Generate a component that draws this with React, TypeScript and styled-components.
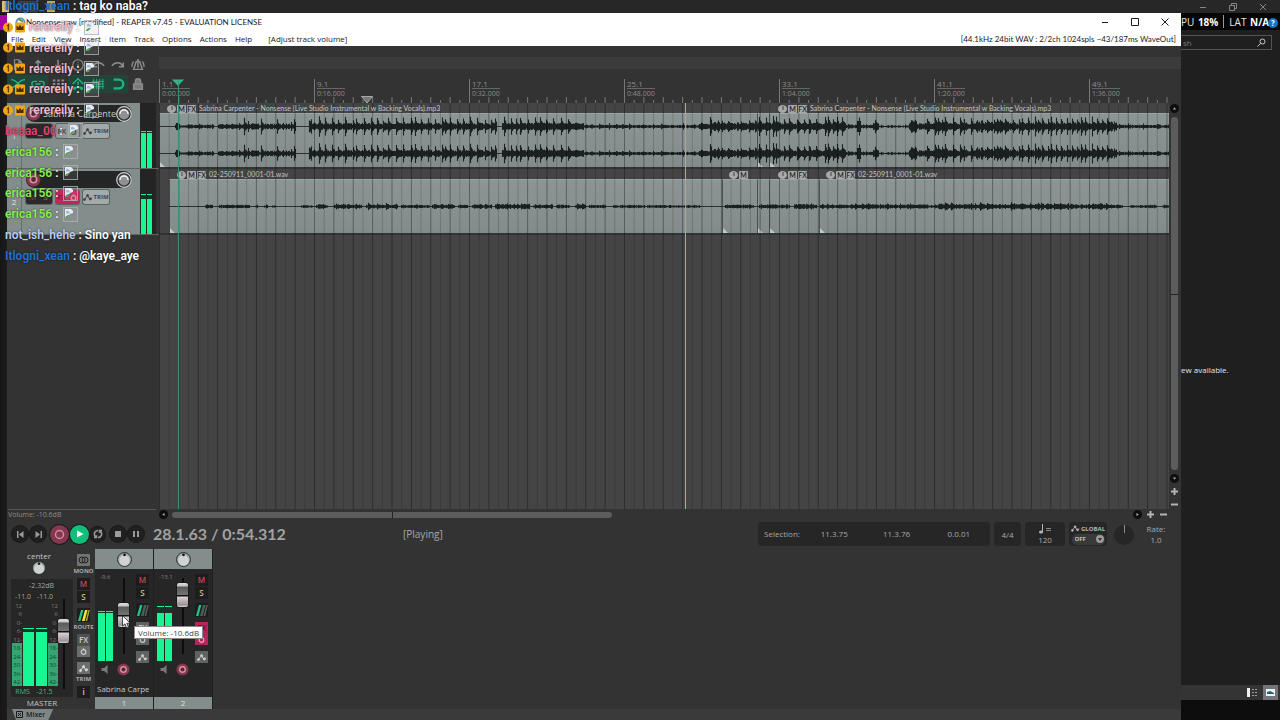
import React from 'react';
import styled, { createGlobalStyle, css } from 'styled-components';

const UI = '"Open Sans", "Noto Sans", sans-serif';
const GREEN = '#1af594';
const TEAL = '#2fb98c';
const PANEL = '#838d8c';

const GlobalStyle = createGlobalStyle`
  * { box-sizing: border-box; }
  html, body, #root { height: 100%; }
  body { margin: 0; background: #1f1f1f; font-family: ${UI}; overflow: hidden; }
  button, input, select {
    font: inherit; color: inherit; background: none; border: 0; padding: 0; margin: 0; min-width: 0; border-radius: 0;
  }
  ul, ol { list-style: none; margin: 0; padding: 0; }
  svg { display: block; }
`;

/* ---------- desktop ---------- */

const Desktop = styled.main`
  position: relative;
  height: 100vh;
  min-height: 480px;
  overflow: hidden;
  background: linear-gradient(90deg, #161616, #1c1c1c 7px, #1f1f1f 8px);
  display: flex;
  flex-direction: column;
`;
const DesktopBar = styled.header`
  flex: 0 0 13px;
  background: #272727;
  display: flex;
  align-items: center;
  justify-content: space-between;
  padding: 0 13px 0 2px;
  color: #858585;
`;
const BarGroup = styled.div<{ $gap: number }>`
  display: flex;
  align-items: center;
  gap: ${p => p.$gap}px;
`;
const Swatch = styled.span<{ $color: string; $width: number }>`
  width: ${p => p.$width}px;
  height: 11px;
  background: ${p => p.$color};
`;
const GhostButton = styled.button`
  display: flex;
  color: inherit;
`;
const EdgeMark = styled.div`
  width: 7px;
  height: 15px;
  margin-top: 2px;
  background: #a800a8;
`;
const Underlay = styled.div`
  flex: 1;
  min-height: 0;
  display: flex;
  justify-content: space-between;
`;
const SideApp = styled.aside`
  width: 99px;
  display: flex;
  flex-direction: column;
  color: #e6e6e6;
  font-size: 8px;
`;
const StatsBar = styled.div`
  height: 17px;
  background: #050505;
  display: flex;
  align-items: center;
  gap: 5px;
  font-size: 10px;
  line-height: 14px;
  white-space: nowrap;
  b { font-weight: 700; color: #fff; margin-left: 1px; }
`;
const StatSplit = styled.span`
  flex: none;
  width: 1px;
  height: 13px;
  background: #9a9a9a;
`;
const Help = styled.button`
  position: absolute;
  right: 2px;
  top: 18px;
  width: 10px;
  height: 10px;
  border-radius: 50%;
  background: #1673c4;
  color: #fff;
  font-size: 8px;
  font-weight: 700;
  line-height: 10px;
`;
const SearchBox = styled.label`
  display: flex;
  align-items: center;
  height: 15px;
  margin: 5px 8px 0 0;
  border: 1px solid #545454;
  border-left: 0;
  padding-right: 5px;
  color: #9a9a9a;
  input { flex: 1; width: 0; padding-left: 2px; font-size: 8px; height: 13px; }
  input::placeholder { color: #777; }
`;
const SideBody = styled.div`
  flex: 1;
  display: flex;
  align-items: center;
  padding-top: 4px;
  line-height: 12px;
`;
const SideStatus = styled.div`
  height: 15px;
  background: #343434;
  display: flex;
  justify-content: flex-end;
  padding-right: 2px;
  gap: 3px;
`;
const ViewButton = styled.button<{ $on?: boolean }>`
  width: 15px;
  display: grid;
  place-items: center;
  background: ${p => (p.$on ? '#77737c' : 'transparent')};
`;
const SideFoot = styled.div`
  height: 20px;
  background: #0d0d0d;
`;

/* ---------- REAPER window ---------- */

const Window = styled.section`
  position: absolute;
  left: 7px;
  right: 99px;
  top: 13px;
  bottom: 0;
  display: flex;
  flex-direction: column;
  background: #333;
  color: #a8a8a8;
`;
const TitleBar = styled.header`
  flex: 0 0 19px;
  display: flex;
  align-items: center;
  padding: 0 11px 1px 8px;
  background: #fff;
  color: #1b1b1b;
  h1 { flex: 1; margin: 0; font-family: Lato, ${UI}; font-size: 8px; line-height: 12px; font-weight: 400; white-space: nowrap; }
`;
const WinButtons = styled.div`
  display: flex;
  gap: 20px;
`;
const MenuBar = styled.nav`
  flex: 0 0 14px;
  display: flex;
  align-items: center;
  gap: 8px;
  padding: 0 5px 1px 4px;
  background: #fff;
  color: #1b1b1b;
  font-size: 8px;
  line-height: 12px;
  white-space: nowrap;
`;
const MenuNote = styled.span<{ $end?: boolean }>`
  margin-left: ${p => (p.$end ? 'auto' : '8px')};
  ${p => p.$end && css`font-family: Lato, ${UI};`}
`;
const Workspace = styled.div`
  flex: 1;
  min-height: 0;
  display: flex;
`;

/* ---------- track control panel ---------- */

const TrackPanel = styled.section`
  flex: 0 0 152px;
  display: flex;
  flex-direction: column;
`;
const Toolbar = styled.div`
  display: grid;
  grid-template-columns: repeat(7, 20px);
  grid-auto-rows: 18px;
  row-gap: 1px;
  padding: 10px 0 9px 1px;
  height: 57px;
`;
const ToolButton = styled.button<{ $on?: boolean }>`
  display: grid;
  place-items: center;
  color: ${p => (p.$on ? '#22b584' : '#8b8b8b')};
  background: ${p => (p.$on ? '#214539' : 'transparent')};
`;
const Track = styled.article`
  display: flex;
  height: 66px;
  border-bottom: 1px solid #5e6665;
`;
const TrackIndex = styled.div`
  width: 15px;
  display: flex;
  flex-direction: column;
  align-items: center;
  justify-content: center;
  background: ${PANEL};
  border-right: 1px solid #666f6e;
  color: #dfe3e3;
  font-size: 8px;
`;
const TrackBody = styled.div`
  flex: 1;
  background: ${PANEL};
  display: flex;
  flex-direction: column;
  gap: 2px;
  padding: 2px 8px 0 4px;
`;
const NameBar = styled.div`
  display: flex;
  align-items: center;
  justify-content: space-between;
  height: 17px;
  border-radius: 9px;
  background: #242626;
  input { width: 75px; font-size: 9px; line-height: 14px; height: 15px; color: #c6c9c9; text-align: right; }
`;
const ControlRow = styled.div`
  display: flex;
  gap: 4px;
  height: 14px;
`;
const Segment = styled.div<{ $tone: string; $width: number }>`
  display: flex;
  width: ${p => p.$width}px;
  background: ${p => p.$tone};
  border-radius: 2px;
  box-shadow: 0 0 0 1px rgba(30, 34, 34, 0.4);
`;
const Key = styled.button<{ $color: string; $small?: boolean }>`
  flex: 1;
  display: flex;
  align-items: center;
  justify-content: center;
  color: ${p => p.$color};
  font-size: ${p => (p.$small ? 6 : 8)}px;
  font-weight: ${p => (p.$small ? 700 : 400)};
  line-height: 12px;
`;
const TrackMeter = styled.div`
  width: 19px;
  background: #242424;
  border-right: 3px solid #333;
  padding-left: 1px;
  display: flex;
  align-items: flex-end;
  gap: 1px;
`;
const MeterBar = styled.span<{ $width: number; $gap: number }>`
  width: ${p => p.$width}px;
  background: linear-gradient(${GREEN} 1px, #16352a 1px, #16352a ${p => p.$gap + 1}px, ${GREEN} ${p => p.$gap + 1}px);
`;
const StatusLine = styled.p`
  margin: auto 3px 0 1px;
  border-top: 1px solid #555;
  height: 11px;
  font-size: 7px;
  line-height: 10px;
  color: #8b8b8b;
`;

/* ---------- arrange view ---------- */

const Arrange = styled.section`
  flex: 1;
  min-width: 0;
  display: flex;
  flex-direction: column;
`;
const Strip = styled.div`
  height: 12px;
  margin-top: 11px;
  background: #3b3b3b;
`;
const Canvas = styled.div`
  position: relative;
  flex: 1;
  min-height: 0;
  display: flex;
  flex-direction: column;
`;
const Ruler = styled.div`
  position: relative;
  height: 34px;
  margin-right: 12px;
  overflow: hidden;
`;
const RulerMark = styled.div`
  position: absolute;
  top: 10px;
  width: 31px;
  height: 24px;
  border-left: 1px solid #777;
  padding-left: 2px;
  color: #8c8c8c;
  font-size: 8px;
  line-height: 9px;
  span { display: block; }
  span + span { border-top: 1px solid #666; font-size: 7px; }
`;
const Fill = styled.svg`
  position: absolute;
  inset: 0;
  width: 100%;
  height: 100%;
  pointer-events: none;
`;
const TimelineRow = styled.div`
  flex: 1;
  min-height: 0;
  display: flex;
`;
const Timeline = styled.div`
  position: relative;
  flex: 1;
  min-width: 0;
  overflow: hidden;
  background: #444;
`;
const Lane = styled.div`
  position: relative;
  border-bottom: 2px solid #303434;
`;
const LaneHead = styled.div`
  position: relative;
  height: 10px;
  overflow: hidden;
`;
const ClipLabel = styled.div`
  position: absolute;
  top: 1px;
  display: flex;
  align-items: center;
  gap: 1px;
  height: 9px;
  font-family: Lato, ${UI};
  font-size: 7px;
  line-height: 9px;
  color: #c3c6c6;
  white-space: nowrap;
  z-index: 1;
  span { padding-left: 2px; }
`;
const Badge = styled.button<{ $round?: boolean }>`
  width: 9px;
  height: 8px;
  border-radius: ${p => (p.$round ? '50%' : '1px')};
  background: #a5a9a9;
  color: #222;
  font-size: 7px;
  line-height: 8px;
  font-weight: 600;
  display: grid;
  place-items: center;
`;
const Clips = styled.div<{ $start: number }>`
  position: relative;
  display: flex;
  height: 54px;
  margin-left: ${p => p.$start}px;
`;
const Clip = styled.div`
  background:
    linear-gradient(45deg, #c3c8c8 3px, transparent 4px),
    linear-gradient(#8a9594, #818c8b);
  border-top: 1px solid #9aa5a4;
  border-left: 1px solid #4a5250;
`;
const Wave = styled.svg`
  position: absolute;
  left: 0;
  top: 0;
`;
const Cursor = styled.div<{ $color: string; $top: number }>`
  position: absolute;
  top: ${p => p.$top}px;
  bottom: 0;
  width: 1px;
  background: ${p => p.$color};
  z-index: 2;
`;
const Marker = styled.svg`
  position: absolute;
  z-index: 2;
`;
const VScroll = styled.div`
  flex: 0 0 12px;
  display: flex;
  flex-direction: column;
  align-items: center;
  gap: 4px;
  padding: 1px 2px 0 0;
`;
const HScroll = styled.div`
  height: 11px;
  display: flex;
  align-items: center;
  gap: 4px;
  padding: 0 13px 0 0;
`;
const VThumb = styled.div`
  flex: 1;
  width: 7px;
  border-radius: 4px;
  background: linear-gradient(transparent 50%, #222 50%, #222 calc(50% + 1px), transparent calc(50% + 1px)) #5c5c5c;
`;
const HTrack = styled.div`
  flex: 1;
  height: 6px;
`;
const HThumb = styled.div`
  width: 46%;
  height: 6px;
  border-radius: 3px;
  background: linear-gradient(90deg, transparent 50%, #222 50%, #222 calc(50% + 1px), transparent calc(50% + 1px)) #5c5c5c;
`;
const ScrollButton = styled.button<{ $dark?: boolean }>`
  width: 9px;
  height: 9px;
  flex: none;
  border-radius: 50%;
  background: ${p => (p.$dark ? '#0e0e0e' : 'transparent')};
  color: #b4b4b4;
  display: grid;
  place-items: center;
`;

/* ---------- transport ---------- */

const Transport = styled.section`
  flex: 0 0 28px;
  display: flex;
  align-items: center;
  padding: 0 9px 0 5px;
  font-size: 9px;
  line-height: 12px;
`;
const RoundButton = styled.button<{ $size: number; $kind?: 'record' | 'play' }>`
  width: ${p => p.$size}px;
  height: ${p => p.$size}px;
  border-radius: 50%;
  display: grid;
  place-items: center;
  color: #9b9b9b;
  background: #202020;
  box-shadow: 0 0 0 1px #191919;
  ${p => p.$kind === 'record' && css`background: #843850; color: #d08c9c;`}
  ${p => p.$kind === 'play' && css`background: #14bd78; color: #fff;`}
`;
const ButtonCluster = styled.div<{ $gap: number; $after: number }>`
  display: flex;
  align-items: center;
  gap: ${p => p.$gap}px;
  margin-right: ${p => p.$after}px;
`;
const Clock = styled.output`
  width: 250px;
  font-size: 16px;
  line-height: 20px;
  font-weight: 700;
  color: #a2a2a2;
  font-family: Lato, ${UI};
`;
const PlayState = styled.span`
  flex: 1;
  font-size: 10px;
`;
const Box = styled.div<{ $width: number }>`
  width: ${p => p.$width}px;
  height: 24px;
  margin-right: 4px;
  border-radius: 4px;
  background: #262626;
  display: flex;
  flex-direction: column;
  align-items: center;
  justify-content: center;
  font-size: 8px;
  line-height: 10px;
  input { width: 100%; text-align: center; height: 11px; }
`;
const SelectionBox = styled.fieldset`
  border: 0;
  margin: 0 4px 0 0;
  padding: 0 0 0 6px;
  width: 232px;
  height: 24px;
  border-radius: 4px;
  background: #262626;
  display: grid;
  grid-template-columns: 39px 1fr 1fr 1fr;
  align-items: center;
  font-size: 8px;
  input { width: 100%; text-align: center; height: 12px; }
`;
const Global = styled.label`
  display: flex;
  align-items: center;
  gap: 1px;
  font-size: 6px;
  line-height: 10px;
  font-weight: 700;
  color: #b5b5b5;
`;
const GlobalSelect = styled.div`
  display: flex;
  align-items: center;
  width: 33px;
  height: 11px;
  padding: 0 1px 0 3px;
  border-radius: 5px;
  background: #3a3a3a;
  color: #c4c4c4;
  select { flex: 1; appearance: none; font-size: 6px; line-height: 10px; font-weight: 700; }
`;
const RateKnob = styled.div`
  margin-left: 2px;
`;
const RateField = styled.label`
  width: 32px;
  display: flex;
  flex-direction: column;
  align-items: center;
  font-size: 8px;
  line-height: 11px;
  margin-left: 5px;
  input { width: 100%; text-align: center; height: 11px; }
`;

/* ---------- mixer ---------- */

const Mixer = styled.section`
  position: relative;
  flex: 0 0 161px;
  min-height: 0;
  display: flex;
  padding: 1px 0 0 4px;
`;
const Master = styled.article`
  width: 84px;
  display: flex;
  gap: 2px;
`;
const MasterMain = styled.div`
  width: 62px;
  display: flex;
  flex-direction: column;
  font-size: 8px;
  line-height: 11px;
  color: #c4c4c4;
`;
const MasterPan = styled.div`
  width: 56px;
  display: flex;
  flex-direction: column;
  align-items: center;
  padding-top: 1px;
`;
const MasterBox = styled.div`
  width: 62px;
  margin-top: 4px;
  padding: 1px 2px 0 1px;
  background: #262626;
  display: grid;
  grid-template-columns: 44px 15px;
  grid-template-rows: 11px 11px 84px 11px;
  font-size: 7px;
  color: #a5a5a5;
`;
const MasterName = styled.span`
  text-align: center;
`;
const Readout = styled.div<{ $green?: boolean; $wide?: boolean }>`
  display: flex;
  justify-content: space-around;
  grid-column: ${p => (p.$wide ? '1 / 3' : '1 / 2')};
  color: ${p => (p.$green ? '#35bd85' : 'inherit')};
  line-height: 11px;
  white-space: nowrap;
`;
const MasterMeter = styled.div`
  display: flex;
  align-items: flex-end;
  justify-content: space-between;
  grid-column: 1;
  grid-row: 3;
  width: 46px;
`;
const Scale = styled.div`
  height: 84px;
  width: 10px;
  display: flex;
  flex-direction: column;
  justify-content: space-between;
  font-size: 6px;
  line-height: 8px;
  text-align: right;
  color: #808080;
  background: linear-gradient(transparent 41px, #35a673 41px);
  span:nth-child(n + 6) { color: #12472f; }
`;
const MasterFader = styled.div`
  grid-column: 2;
  grid-row: 2 / 5;
  display: flex;
  justify-content: center;
  padding-top: 8px;
`;
const Fader = styled.input<{ $length: number }>`
  appearance: none;
  writing-mode: vertical-lr;
  direction: rtl;
  width: 14px;
  height: ${p => p.$length}px;
  background: linear-gradient(#0d0d0d, #0d0d0d) center / 2px 100% no-repeat;
  &::-webkit-slider-thumb {
    appearance: none;
    width: 13px;
    height: 26px;
    border-radius: 3px;
    border: 1px solid #1b1b1b;
    background: linear-gradient(#dedede 0, #c4c4c4 3px, #5a5a5a 4px, #747474 12px, #111 12px, #111 13px, #d8d2d4 14px, #9c9195 22px, #d9d9d9 24px);
  }
`;
const ButtonStack = styled.div`
  width: 17px;
  display: flex;
  flex-direction: column;
  align-items: center;
  padding-top: 5px;
`;
const StackLabel = styled.span`
  margin-bottom: 2px;
  font-size: 6px;
  line-height: 10px;
  font-weight: 700;
  color: #a8a8a8;
`;
const SmallButton = styled.button<{ $tone?: string; $color?: string; $height?: number; $after?: number }>`
  flex: none;
  width: 13px;
  height: ${p => p.$height ?? 12}px;
  margin-bottom: ${p => p.$after ?? 1}px;
  display: grid;
  place-items: center;
  background: ${p => p.$tone ?? '#1d1d1d'};
  color: ${p => p.$color ?? '#ccc'};
  font-size: 8px;
  line-height: 10px;
  font-weight: 600;
`;
const Channel = styled.article`
  width: 59px;
  border-right: 1px solid #1f1f1f;
  background: #262626;
  display: flex;
  flex-direction: column;
`;
const ChannelTop = styled.div`
  height: 20px;
  background: ${PANEL};
  display: grid;
  place-items: center;
`;
const ChannelBody = styled.div`
  height: 94px;
  display: grid;
  grid-template-columns: 20px 17px 1fr;
  justify-items: center;
`;
const ChannelMeters = styled.div`
  display: flex;
  flex-wrap: wrap;
  align-items: flex-end;
  align-content: space-between;
  padding: 4px 0 3px 3px;
  gap: 1px;
  font-size: 6px;
  line-height: 9px;
  color: #858585;
  span:first-child { width: 100%; padding-left: 2px; }
`;
const FaderSlot = styled.div`
  padding-top: 9px;
  display: flex;
  justify-content: center;
`;
const ChannelFoot = styled.div`
  height: 12px;
  display: grid;
  grid-template-columns: 20px 17px;
  place-items: center;
  color: #777;
`;
const ChannelName = styled.input`
  width: 54px;
  height: 22px;
  padding: 4px 0 0 2px;
  font-size: 8px;
  color: #c6c6c6;
`;
const ChannelNumber = styled.div`
  height: 12px;
  margin-top: auto;
  background: ${PANEL};
  color: #dde1e1;
  font-size: 8px;
  line-height: 12px;
  text-align: center;
`;
const Tip = styled.div`
  position: absolute;
  left: 127px;
  top: 78px;
  height: 13px;
  padding: 0 3px;
  background: #fff;
  border: 1px solid #888;
  color: #444;
  font-size: 8px;
  line-height: 11px;
  white-space: nowrap;
`;
const Pointer = styled.svg`
  position: absolute;
  left: 115px;
  top: 67px;
`;
const DockTabs = styled.footer`
  flex: 0 0 11px;
  background: #3a3a3a;
  padding-left: 5px;
`;
const DockTab = styled.button`
  display: flex;
  align-items: center;
  gap: 3px;
  height: 11px;
  padding: 0 8px 0 4px;
  background: #7d8685;
  clip-path: polygon(0 0, 100% 0, calc(100% - 5px) 100%, 4px 100%);
  color: #1c1c1c;
  font-size: 7px;
  line-height: 10px;
  font-weight: 600;
`;
const KnobLabel = styled.label`
  position: relative;
  display: block;
  flex: none;
  input { position: absolute; inset: 0; width: 100%; height: 100%; opacity: 0; }
`;

/* ---------- chat overlay ---------- */

const Chat = styled.ol`
  position: absolute;
  left: 5px;
  top: -4px;
  height: 270px;
  display: grid;
  grid-auto-rows: 1fr;
  font-family: Roboto, sans-serif;
  font-size: 12px;
  line-height: 14px;
  font-weight: 600;
  color: #fff;
  text-shadow: 0 0 2px rgba(0, 0, 0, 0.7);
  z-index: 5;
`;
const Message = styled.li`
  display: flex;
  align-items: center;
  gap: 3px;
  white-space: nowrap;
`;
const Author = styled.span<{ $color: string }>`
  color: ${p => p.$color};
`;
const Badges = styled.span`
  display: flex;
  margin: 0 1px 0 -2px;
`;
const Body = styled.span`
  font-weight: 600;
`;
const Emote = styled.span`
  margin-left: 2px;
`;

/* ---------- drawings ---------- */

function Knob({ label, size, value = 50 }: { label: string; size: number; value?: number }) {
  return (
    <KnobLabel>
      <input type="range" aria-label={label} defaultValue={value} />
      <svg width={size} height={size} viewBox="0 0 16 16">
        <circle cx="8" cy="8" r="7.4" fill="#a9adad" stroke="#222" strokeWidth="1" />
        <circle cx="8" cy="9" r="5.6" fill="#cfd3d3" />
        <circle cx="8" cy="3" r="1.4" fill="#111" />
      </svg>
    </KnobLabel>
  );
}

function PanKnob({ label }: { label: string }) {
  return (
    <KnobLabel>
      <input type="range" aria-label={label} />
      <svg width="16" height="16" viewBox="0 0 16 16">
        <circle cx="8" cy="8" r="7.3" fill="#2e2e2e" stroke="#d2d2d2" strokeWidth="1.2" />
        <circle cx="8" cy="8" r="5.4" fill="#8f9292" />
        <path d="M4 8a4 4 0 0 1 8 0" stroke="#f4f4f4" strokeWidth="1.4" fill="none" />
      </svg>
    </KnobLabel>
  );
}

const RecordDot = ({ size }: { size: number }) => (
  <svg width={size} height={size} viewBox="0 0 14 14">
    <circle cx="7" cy="7" r="6.5" fill="#85384f" />
    <circle cx="7" cy="7" r="3" fill="#5a2536" stroke="#d493a3" strokeWidth="1.5" />
  </svg>
);

const Power = () => (
  <svg width="9" height="9" viewBox="0 0 10 10" fill="none" stroke="currentColor" strokeWidth="1.3">
    <circle cx="5" cy="5.5" r="2.6" />
    <path d="M5 1.4v2" />
  </svg>
);

const Envelope = ({ width = 10 }: { width?: number }) => (
  <svg width={width} height="9" viewBox="0 0 12 9" fill="none" stroke="currentColor" strokeWidth="1.2">
    <path d="M1.5 7L5.5 2.2L8 6.5L11 5" />
    <circle cx="1.8" cy="7" r="1.2" fill="currentColor" />
    <circle cx="5.5" cy="2.2" r="1.2" fill="currentColor" />
    <circle cx="8.8" cy="6.2" r="1.2" fill="currentColor" />
  </svg>
);

const RouteIcon = ({ bright }: { bright?: boolean }) => (
  <svg width="13" height="13" viewBox="0 0 13 13">
    <path d="M4 1L1 12H3.4L6.4 1Z" fill="#1fc48a" />
    <path d="M8 1L5 12H7.6L10.6 1Z" fill={bright ? '#f3e436' : '#46615a'} />
    <path d="M11.4 1L8.6 12H10.2L12.8 1Z" fill={bright ? '#b1a62a' : '#5a5f5e'} />
  </svg>
);

const Speaker = () => (
  <svg width="8" height="9" viewBox="0 0 8 9" fill="currentColor">
    <path d="M0.5 3h2.6L6.6 0v9L3.1 6H0.5z" />
  </svg>
);

const toolIcons: { name: string; on?: boolean; art: React.ReactNode }[] = [
  { name: 'New project', art: <path d="M4 2h5l3 3v8H4zM9 2v3h3" /> },
  { name: 'Open project', art: <path d="M8 12V3M5 6l3-3 3 3" strokeWidth="1.8" /> },
  { name: 'Save project', art: <path d="M8 2v9M5 8l3 3 3-3" strokeWidth="1.8" /> },
  { name: 'Project settings', art: <path d="M8 2a6 6 0 1 0 .01 0M8 4.5v1M8 7v4" /> },
  { name: 'Undo', art: <path d="M2 5v5h5M2.5 9.5C5 4.5 11 4 15 9" strokeWidth="1.8" /> },
  { name: 'Redo', art: <path d="M14 5v5H9M13.5 9.5C11 4.5 5 4 1 9" strokeWidth="1.8" /> },
  { name: 'Metronome', art: <path d="M6 4h4l3 9H3zM8 4v7M3 4C1 6 1 9 1 10M13 4c2 2 2 5 2 6M8 1v2" strokeWidth="1.7" /> },
  { name: 'Auto crossfade', on: true, art: <path d="M0 3C8 3 8 12 16 12M0 12C8 12 8 3 16 3" strokeWidth="1.6" /> },
  { name: 'Item grouping', on: true, art: <path d="M7 5H4a3 3 0 0 0 0 6h3M9 5h3a3 3 0 0 1 0 6H9M5 8h6" strokeWidth="1.6" /> },
  { name: 'Ripple editing', art: <path d="M2 4h3M7 4h3M12 4h3M2 8h3M7 8h3M12 8h3M2 12h3M7 12h3M12 12h3" strokeWidth="2.4" /> },
  { name: 'Move envelopes', on: true, art: <path d="M2 8l6-6 6 6M4 12h8M4 12a1 1 0 1 0 .1 0M12 12a1 1 0 1 0 .1 0M8 5v4" strokeWidth="1.6" /> },
  { name: 'Grid lines', on: true, art: <path d="M3 2v12M6.5 2v12M10 2v12M13.5 2v12M1 5h14M1 8h14M1 11h14" strokeWidth="1" /> },
  { name: 'Snapping', on: true, art: <path d="M3 3h6a5 5 0 0 1 0 10H3" strokeWidth="2.6" /> },
  { name: 'Locking', art: <path d="M3 8h10v6H3zM5 8V5a3 3 0 0 1 6 0v3" fill="currentColor" fillOpacity="0.8" strokeWidth="1.6" /> },
];

/* ---------- timeline data ---------- */

const BAR8 = 155;
type Seg = [from: number, to: number, base: number, peak: number, every: number];

const musicShape: Seg[] = [
  [16, 21, 3, 4, 3], [21, 27, 1, 1, 0], [27, 55, 1.6, 3, 9], [59, 78, 2, 3, 6],
  [78, 83, 1.8, 4, 4], [83, 90, 2, 9, 7], [90, 100, 2.4, 4, 6], [100, 106, 2, 9, 6], [106, 116, 2.4, 4, 6],
  [116, 122, 2, 9, 6], [122, 133, 2.4, 4, 6], [133, 137, 2, 9, 3],
  [150, 153, 7, 8, 2], [153, 158, 3, 4, 3],
  [158, 338, 2.8, 10, 5], [343, 415, 3, 10, 5],
  [415, 425, 3, 4, 3], [425, 540, 1.4, 3, 9], [540, 551, 2.4, 4, 5], [551, 553, 8, 8, 1],
  [553, 598, 3.2, 7, 6], [598, 664, 3.4, 10, 5], [664, 687, 3.4, 10, 3], [687, 698, 1.6, 3, 5],
  [698, 702, 5, 9, 2], [702, 714, 1.4, 3, 5], [714, 720, 3, 9, 3], [720, 750, 0.8, 2, 6],
  [750, 758, 4, 8, 3], [758, 766, 2.6, 4, 4], [766, 816, 3, 10, 5], [816, 852, 4, 8, 4],
  [852, 950, 3, 10, 4], [950, 958, 4, 6, 4], [958, 1010, 1.5, 3, 14],
];
const voiceShape: Seg[] = [
  [46, 54, 1.6, 2, 3], [60, 91, 1.4, 2, 4], [96, 99, 1, 2, 2], [105, 109, 1, 2, 2], [113, 117, 0.9, 1, 2],
  [142, 154, 1, 2, 4], [157, 169, 1.6, 3, 4], [175, 203, 1.8, 3, 5], [207, 239, 1.6, 3.5, 6], [242, 271, 1.4, 2, 5],
  [273, 296, 1.8, 3, 4], [299, 309, 1.4, 2, 3], [313, 333, 1.5, 2.5, 4], [336, 371, 2, 3, 5], [374, 394, 1.4, 2.4, 4],
  [397, 411, 1.4, 2, 4], [416, 427, 1.8, 3, 4], [430, 447, 1.4, 2, 4], [454, 486, 1.1, 1.8, 4], [488, 512, 1.1, 1.6, 4],
  [512, 541, 1, 1.6, 4], [566, 595, 1.4, 2.4, 5], [600, 631, 1.6, 2.4, 4], [635, 658, 1.8, 3, 4],
  [661, 690, 1.6, 2.6, 5], [690, 770, 1.8, 3, 5], [770, 780, 1.2, 2, 4], [780, 795, 2.4, 4, 4], [795, 810, 1.8, 3, 4],
  [810, 835, 2.2, 4, 4], [835, 850, 1.6, 3, 4], [850, 880, 2.2, 4, 5],
  [880, 910, 2.2, 4, 6], [910, 932, 1.8, 3, 4], [932, 950, 2.2, 4, 4], [950, 964, 1.4, 2, 5], [971, 998, 1.1, 1.8, 6], [1003, 1018, 1.2, 2, 6],
];

function wavePath(shape: Seg[], middle: number, offset: number) {
  let seed = 7;
  const rand = () => {
    seed = (seed * 16807) % 2147483647;
    return seed / 2147483647;
  };
  let d = '';
  shape.forEach(([from, to, base, peak, every]) => {
    let next = from + 2;
    let decay = 0;
    for (let x = from; x < to; x++) {
      if (every && x >= next) {
        decay = (peak - base) * (0.55 + rand() * 0.45);
        next = x + 2 + Math.round(every * (0.2 + rand() * 1.1));
      }
      const h = base * (0.6 + rand() * 0.6) + decay;
      decay *= 0.42;
      d += `M${x - offset + 0.5} ${(middle - h).toFixed(1)}V${(middle + h).toFixed(1)}`;
    }
  });
  return d;
}

const musicTop = wavePath(musicShape, 13.5, 0);
const musicBottom = wavePath(musicShape, 40.5, 0);
const voice = wavePath(voiceShape, 27.5, 10);

interface LabelData { at: number; fx?: boolean; name?: string }
interface LaneData { start: number; clips: number[]; labels: LabelData[]; paths: string[]; axes: number[] }

const SONG = 'Sabrina Carpenter - Nonsense (Live Studio Instrumental w Backing Vocals).mp3';
const lanes: LaneData[] = [
  {
    start: 0, clips: [598, 12], paths: [musicTop, musicBottom], axes: [13.5, 40.5],
    labels: [{ at: 8, fx: true, name: SONG }, { at: 619, fx: true, name: SONG }],
  },
  {
    start: 10, clips: [553, 35, 12, 50], paths: [voice], axes: [27.5],
    labels: [{ at: 18, fx: true, name: '02-250911_0001-01.wav' }, { at: 570 }, { at: 619, fx: true }, { at: 667, fx: true, name: '02-250911_0001-01.wav' }],
  },
];

const marks = ['0:00.000', '0:16.000', '0:32.000', '0:48.000', '1:04.000', '1:20.000', '1:36.000'];
const steps = Array.from({ length: 16 }, (_, i) => i);

function LaneView({ lane }: { lane: LaneData }) {
  return (
    <Lane>
      <LaneHead>
        {lane.labels.map(l => (
          <ClipLabel key={l.at} style={{ left: l.at }}>
            <Badge $round aria-label="Item volume">
              <svg width="2" height="6"><path d="M1 0v4" stroke="#444" /></svg>
            </Badge>
            <Badge>M</Badge>
            {l.fx && <Badge>FX</Badge>}
            {l.name && <span>{l.name}</span>}
          </ClipLabel>
        ))}
      </LaneHead>
      <Clips $start={lane.start}>
        {lane.clips.map((w, i) => <Clip key={i} style={{ flex: `0 0 ${w}px` }} />)}
        <Clip style={{ flex: 1 }} />
        <Wave width="100%" height="54" fill="none">
          {lane.axes.map(y => <rect key={y} x="0" y={y - 0.5} width="100%" height="1" fill="#2a3130" />)}
          {lane.paths.map((d, i) => <path key={i} d={d} stroke="#1b2120" strokeWidth="1.1" />)}
        </Wave>
      </Clips>
    </Lane>
  );
}

const Plus = () => <svg width="7" height="7"><path d="M3.5 0v7M0 3.5h7" stroke="currentColor" strokeWidth="2" /></svg>;
const Minus = () => <svg width="7" height="7"><path d="M0 3.5h7" stroke="currentColor" strokeWidth="2" /></svg>;
const Tri = ({ turn }: { turn: number }) => (
  <svg width="5" height="5" viewBox="0 0 5 5"><path d="M1 3.5L2.5 1.2L4 3.5z" fill="currentColor" transform={`rotate(${turn} 2.5 2.5)`} /></svg>
);

function ArrangeView() {
  return (
    <Arrange>
      <Strip />
      <Canvas>
        <Ruler>
          <Fill>
            <defs>
              <pattern id="ticks" width={BAR8} height="34" patternUnits="userSpaceOnUse">
                {steps.map(i => (
                  <path key={i} d={`M${(i * BAR8) / 16 + 0.5} ${i % 2 ? 31 : 28}V34`} stroke="#777" />
                ))}
              </pattern>
            </defs>
            <rect width="100%" height="100%" fill="url(#ticks)" />
          </Fill>
          {marks.map((time, i) => (
            <RulerMark key={time} style={{ left: i * BAR8 }}>
              <span>{i * 8 + 1}.1</span>
              <span>{time}</span>
            </RulerMark>
          ))}
        </Ruler>
        <TimelineRow>
          <Timeline>
            {lanes.map((lane, i) => <LaneView key={i} lane={lane} />)}
            <Fill>
              <defs>
                <pattern id="grid" width={BAR8} height="10" patternUnits="userSpaceOnUse">
                  {steps.map(i => (
                    <path key={i} d={`M${(i * BAR8) / 16 + 0.5} 0V10`} stroke="#000" strokeOpacity={i % 2 ? 0.16 : 0.34} />
                  ))}
                </pattern>
              </defs>
              <rect width="100%" height="100%" fill="url(#grid)" />
            </Fill>
          </Timeline>
          <VScroll>
            <ScrollButton $dark aria-label="Scroll up"><Tri turn={0} /></ScrollButton>
            <VThumb />
            <ScrollButton $dark aria-label="Scroll down"><Tri turn={180} /></ScrollButton>
            <ScrollButton aria-label="Zoom in vertically"><Plus /></ScrollButton>
            <ScrollButton aria-label="Zoom out vertically"><Minus /></ScrollButton>
          </VScroll>
        </TimelineRow>
        <Marker width="12" height="8" viewBox="0 0 12 8" style={{ left: 13, top: 10 }}>
          <path d="M0 0.5h12L6 7z" fill={TEAL} />
        </Marker>
        <Marker width="12" height="8" viewBox="0 0 12 8" style={{ left: 202, top: 27 }}>
          <path d="M0.5 0.5h11L6 7z" fill="#777" stroke="#aaa" />
        </Marker>
        <Cursor $color="#3d8f76" $top={12} style={{ left: 19 }} />
        <Cursor $color="#e0a51c" $top={34} style={{ left: 526 }} />
      </Canvas>
      <HScroll>
        <ScrollButton $dark aria-label="Scroll left"><Tri turn={270} /></ScrollButton>
        <HTrack><HThumb /></HTrack>
        <ScrollButton $dark aria-label="Scroll right"><Tri turn={90} /></ScrollButton>
        <ScrollButton aria-label="Zoom in"><Plus /></ScrollButton>
        <ScrollButton aria-label="Zoom out"><Minus /></ScrollButton>
      </HScroll>
    </Arrange>
  );
}

interface TrackProps { index: number; name: string; level: number; gap: number; hot?: boolean }

function TrackControls({ index, name, level, gap, hot }: TrackProps) {
  return (
    <Track>
      <TrackIndex>{index}</TrackIndex>
      <TrackBody>
        <NameBar>
          <button aria-label={`Arm track ${index}`}><RecordDot size={15} /></button>
          <input aria-label={`Track ${index} name`} defaultValue={name} />
          <PanKnob label={`Track ${index} pan`} />
        </NameBar>
        <ControlRow>
          <Segment $tone="#2a2a2a" $width={26}>
            <Key $color="#8e4250">M</Key>
            <Key $color="#8e8b50">S</Key>
          </Segment>
          <Segment $tone={hot ? '#c2255c' : '#949b9a'} $width={23}>
            <Key $color={hot ? '#6e1433' : '#222'}>FX</Key>
            <Key $color={hot ? '#f08bab' : '#444'} aria-label="Bypass effects"><Power /></Key>
          </Segment>
          <Segment $tone="#a3aaa9" $width={26}>
            <Key $color="#444" $small><Envelope />TRIM</Key>
          </Segment>
        </ControlRow>
      </TrackBody>
      <TrackMeter>
        <MeterBar $width={5} $gap={gap} style={{ height: level }} />
        <MeterBar $width={5} $gap={gap} style={{ height: level }} />
      </TrackMeter>
    </Track>
  );
}

interface StripProps { index: number; name: string; peak: string; fader: number; level: number; gap: number; hot?: boolean }

function ChannelStrip({ index, name, peak, fader, level, gap, hot }: StripProps) {
  const fx = hot ? '#b3265a' : '#5d6261';
  return (
    <Channel>
      <ChannelTop><Knob label={`Channel ${index} pan`} size={15} /></ChannelTop>
      <ChannelBody>
        <ChannelMeters>
          <span>{peak}</span>
          <MeterBar $width={7} $gap={gap} style={{ height: level }} />
          <MeterBar $width={7} $gap={gap} style={{ height: level }} />
        </ChannelMeters>
        <FaderSlot>
          <Fader type="range" aria-label={`Channel ${index} volume`} $length={76} defaultValue={fader} />
        </FaderSlot>
        <ButtonStack>
          <SmallButton $color="#c24a5c">M</SmallButton>
          <SmallButton $color="#c8c356" $after={4}>S</SmallButton>
          <SmallButton $height={14} $after={5} aria-label="Routing"><RouteIcon /></SmallButton>
          <SmallButton $tone={fx} $color={hot ? '#6b1232' : '#ccc'} $after={0}>FX</SmallButton>
          <SmallButton $tone={fx} $color={hot ? '#f2a0bb' : '#ccc'} $height={11} $after={6} aria-label="Bypass effects"><Power /></SmallButton>
          <SmallButton $tone="#5f6463" $color="#ccc" aria-label="Envelopes"><Envelope /></SmallButton>
        </ButtonStack>
      </ChannelBody>
      <ChannelFoot>
        <button aria-label="Monitor input"><Speaker /></button>
        <button aria-label={`Arm channel ${index}`}><RecordDot size={13} /></button>
      </ChannelFoot>
      <ChannelName aria-label={`Channel ${index} name`} defaultValue={name} />
      <ChannelNumber>{index}</ChannelNumber>
    </Channel>
  );
}

const scale = ['12', '6', '0-', '6-', '12-', '18-', '24-', '30-', '36-', '42-'];

function MasterStrip() {
  return (
    <Master>
      <MasterMain>
        <MasterPan>
          <span>center</span>
          <Knob label="Master pan" size={14} />
        </MasterPan>
        <MasterBox>
          <Readout $wide>-2.32dB</Readout>
          <Readout><span>-11.0</span><span>-11.0</span></Readout>
          <MasterMeter>
            <Scale>{scale.map(s => <span key={s}>{s}</span>)}</Scale>
            <MeterBar $width={11} $gap={3} style={{ height: 58 }} />
            <MeterBar $width={11} $gap={3} style={{ height: 58 }} />
            <Scale>{scale.map(s => <span key={s}>{s}</span>)}</Scale>
          </MasterMeter>
          <Readout $green><span>RMS</span><span>-21.5</span></Readout>
          <MasterFader>
            <Fader type="range" aria-label="Master volume" $length={90} defaultValue={70} />
          </MasterFader>
        </MasterBox>
        <MasterName>MASTER</MasterName>
      </MasterMain>
      <ButtonStack>
        <SmallButton $tone="#6f7473" $color="#222" $after={0} aria-label="Mono">
          <svg width="11" height="8" viewBox="0 0 11 8" fill="none" stroke="currentColor"><circle cx="4" cy="4" r="3" /><circle cx="7" cy="4" r="3" /></svg>
        </SmallButton>
        <StackLabel>MONO</StackLabel>
        <SmallButton $color="#c24a5c">M</SmallButton>
        <SmallButton $color="#c8c356" $after={5}>S</SmallButton>
        <SmallButton $height={14} $after={0} aria-label="Routing"><RouteIcon bright /></SmallButton>
        <StackLabel>ROUTE</StackLabel>
        <SmallButton $tone="#4d5150" $after={0}>FX</SmallButton>
        <SmallButton $tone="#6a6f6e" $height={11} $after={5} aria-label="Bypass master effects"><Power /></SmallButton>
        <SmallButton $tone="#6a6f6e" $color="#ddd" $after={0} aria-label="Master envelopes"><Envelope /></SmallButton>
        <StackLabel>TRIM</StackLabel>
        <SmallButton aria-label="Project notes">i</SmallButton>
      </ButtonStack>
    </Master>
  );
}

/* ---------- chat ---------- */

const BrokenImage = () => (
  <svg width="15" height="15" viewBox="0 0 15 15">
    <rect x="0.5" y="0.5" width="14" height="14" fill="#aaa" fillOpacity="0.15" stroke="#b0b0b0" strokeOpacity="0.8" />
    <path d="M2 2h6l2 2v2L7 7 4 11H2z" fill="#e8ecf2" />
    <path d="M3 5.5a1.5 1.5 0 0 1 3-.5 1 1 0 0 1 1 1.5H3z" fill="#9db8e6" />
    <path d="M2 11c1-3 3-3 5-3l-3 3z" fill="#4aa34a" />
  </svg>
);

const CrownBadges = () => (
  <Badges>
    <svg width="22" height="11" viewBox="0 0 22 11">
      <circle cx="5" cy="5.5" r="5" fill="#f2a516" />
      <path d="M4 4l1.4-1.2V8.5" stroke="#6b3c00" strokeWidth="1.3" fill="none" />
      <rect x="12" y="0.5" width="10" height="10" rx="1" fill="#f2a516" />
      <path d="M13.5 8V3.5l2 1.7L17 2.8l1.5 2.4 2-1.7V8z" fill="#4a2c05" />
    </svg>
  </Badges>
);

interface ChatLine { who: string; color: string; text?: string; vip?: boolean }
const chat: ChatLine[] = [
  { who: 'Itlogni_xean', color: '#2273d2', text: 'tag ko naba?' },
  ...Array.from({ length: 5 }, () => ({ who: 'rerereily', color: '#f2bccd', vip: true })),
  { who: 'beaaa_00', color: '#e0446e' },
  ...Array.from({ length: 4 }, () => ({ who: 'erica156', color: '#86f04c' })),
  { who: 'not_ish_hehe', color: '#b9cdf5', text: 'Sino yan' },
  { who: 'Itlogni_xean', color: '#2273d2', text: '@kaye_aye' },
];

export default function App() {
  return (
    <Desktop>
      <GlobalStyle />
      <DesktopBar>
        <BarGroup $gap={9}>
          <Swatch $color="#d9c27a" $width={7} />
          <Swatch $color="#39424f" $width={20} />
          <Swatch $color="#c6b25e" $width={8} />
        </BarGroup>
        <BarGroup $gap={22}>
          <GhostButton aria-label="Minimize"><svg width="8" height="8"><path d="M1 4.5h6" stroke="currentColor" /></svg></GhostButton>
          <GhostButton aria-label="Restore"><svg width="8" height="8" fill="none" stroke="currentColor"><path d="M0.5 2.5h5v5h-5zM2.5 2V0.5h5v5H6" /></svg></GhostButton>
          <GhostButton aria-label="Close"><svg width="8" height="8"><path d="M1 1l6 6M7 1l-6 6" stroke="currentColor" /></svg></GhostButton>
        </BarGroup>
      </DesktopBar>
      <Underlay>
        <EdgeMark />
        <SideApp>
          <StatsBar>
            <span>PU <b>18%</b></span>
            <StatSplit />
            <span>LAT <b>N/A</b></span>
          </StatsBar>
          <SearchBox>
            <input type="search" aria-label="Search" placeholder="sh" />
            <svg width="9" height="9" viewBox="0 0 9 9" fill="none" stroke="#ccc"><circle cx="5.5" cy="3.5" r="2.5" /><path d="M3.5 5.5L0.5 8.5" /></svg>
          </SearchBox>
          <SideBody>ew available.</SideBody>
          <SideStatus>
            <ViewButton aria-label="Details view">
              <svg width="11" height="9"><path d="M0 0h3v9H0z" fill="#eee" /><path d="M5 1.5h2M8 1.5h2M5 4.5h2M8 4.5h2M5 7.5h2M8 7.5h2" stroke="#999" /></svg>
            </ViewButton>
            <ViewButton $on aria-label="Large icons view">
              <svg width="9" height="7"><path d="M0 0h9v7H0z" fill="#e8f4f4" /><path d="M1 3l3-1 4 2v1H1z" fill="#2b5f63" /></svg>
            </ViewButton>
          </SideStatus>
          <SideFoot />
        </SideApp>
      </Underlay>
      <Help aria-label="Help">?</Help>

      <Window>
        <TitleBar>
          <svg width="11" height="11" viewBox="0 0 12 12"><circle cx="6" cy="6" r="4.5" fill="none" stroke="#5e92c9" strokeWidth="2" /><path d="M3 2l6 3" stroke="#4c9d56" strokeWidth="2" /></svg>
          <h1>Nonsense-raw [modified] - REAPER v7.45 - EVALUATION LICENSE</h1>
          <WinButtons>
            <GhostButton aria-label="Minimize window"><svg width="10" height="8"><path d="M2 4.5h6" stroke="currentColor" /></svg></GhostButton>
            <GhostButton aria-label="Maximize window"><svg width="10" height="8"><path d="M1.5 0.5h7v7h-7z" fill="none" stroke="currentColor" /></svg></GhostButton>
            <GhostButton aria-label="Close window"><svg width="10" height="8"><path d="M1.5 0.5l7 7M8.5 0.5l-7 7" stroke="currentColor" /></svg></GhostButton>
          </WinButtons>
        </TitleBar>
        <MenuBar>
          {['File', 'Edit', 'View', 'Insert', 'Item', 'Track', 'Options', 'Actions', 'Help'].map(m => <button key={m}>{m}</button>)}
          <MenuNote>[Adjust track volume]</MenuNote>
          <MenuNote $end>[44.1kHz 24bit WAV : 2/2ch 1024spls ~43/187ms WaveOut]</MenuNote>
        </MenuBar>

        <Workspace>
          <TrackPanel>
            <Toolbar>
              {toolIcons.map(t => (
                <ToolButton key={t.name} $on={t.on} aria-label={t.name}>
                  <svg width="14" height="14" viewBox="0 0 16 16" fill="none" stroke="currentColor" strokeWidth="1.4">{t.art}</svg>
                </ToolButton>
              ))}
            </Toolbar>
            <TrackControls index={1} name="Sabrina Carpente" level={37} gap={1} />
            <TrackControls index={2} name="" level={40} gap={4} hot />
            <StatusLine>Volume: -10.6dB</StatusLine>
          </TrackPanel>
          <ArrangeView />
        </Workspace>

        <Transport>
          <ButtonCluster $gap={2} $after={4}>
            <RoundButton $size={16} aria-label="Go to start"><svg width="7" height="7"><path d="M0 0h1.5v7H0zM6.5 0v7L2 3.5z" fill="currentColor" /></svg></RoundButton>
            <RoundButton $size={16} aria-label="Go to end"><svg width="7" height="7"><path d="M5.5 0H7v7H5.5zM0.5 0v7L5 3.5z" fill="currentColor" /></svg></RoundButton>
          </ButtonCluster>
          <ButtonCluster $gap={1} $after={5}>
            <RoundButton $size={19} $kind="record" aria-label="Record"><svg width="11" height="11"><circle cx="5.5" cy="5.5" r="4" fill="none" stroke="currentColor" strokeWidth="1.5" /></svg></RoundButton>
            <RoundButton $size={19} $kind="play" aria-label="Play"><svg width="8" height="8"><path d="M1 0.5L7.5 4L1 7.5z" fill="currentColor" /></svg></RoundButton>
            <RoundButton $size={15} aria-label="Repeat"><svg width="10" height="10" viewBox="0 0 10 10" fill="none" stroke="currentColor" strokeWidth="1.5"><path d="M2.5 7.6a3.6 3.6 0 0 1 2.500-6.200M7.500 2.400a3.600 3.600 0 0 1-2.500 6.200M1 8.600h2.500V6.200M9 1.400H6.500V3.800" /></svg></RoundButton>
          </ButtonCluster>
          <ButtonCluster $gap={2} $after={9}>
            <RoundButton $size={16} aria-label="Stop"><svg width="6" height="6"><path d="M0 0h6v6H0z" fill="currentColor" /></svg></RoundButton>
            <RoundButton $size={16} aria-label="Pause"><svg width="6" height="6"><path d="M0 0h2v6H0zM4 0h2v6H4z" fill="currentColor" /></svg></RoundButton>
          </ButtonCluster>
          <Clock>28.1.63 / 0:54.312</Clock>
          <PlayState>[Playing]</PlayState>
          <SelectionBox>
            <span>Selection:</span>
            <input aria-label="Selection start" defaultValue="11.3.75" />
            <input aria-label="Selection end" defaultValue="11.3.76" />
            <input aria-label="Selection length" defaultValue="0.0.01" />
          </SelectionBox>
          <Box $width={27}><input aria-label="Time signature" defaultValue="4/4" /></Box>
          <Box $width={40}>
            <svg width="14" height="10" viewBox="0 0 14 10"><path d="M4.5 0v8" stroke="#b5b5b5" /><ellipse cx="3" cy="8" rx="2" ry="1.6" fill="#b5b5b5" /><path d="M8 4.5h5M8 6.5h5" stroke="#8a8a8a" /></svg>
            <input aria-label="Tempo" defaultValue="120" />
          </Box>
          <Box $width={38}>
            <Global htmlFor="automation"><Envelope width={9} />GLOBAL</Global>
            <GlobalSelect>
              <select id="automation" defaultValue="OFF"><option>OFF</option></select>
              <svg width="8" height="8" viewBox="0 0 8 8"><circle cx="4" cy="4" r="4" fill="#9a9a9a" /><path d="M2 3h4L4 6z" fill="#333" /></svg>
            </GlobalSelect>
          </Box>
          <RateKnob>
            <KnobLabel>
              <input type="range" aria-label="Play rate" />
              <svg width="22" height="22"><circle cx="11" cy="12" r="10" fill="#262626" /><path d="M11.5 2v8" stroke="#8f8f8f" /></svg>
            </KnobLabel>
          </RateKnob>
          <RateField>Rate:<input defaultValue="1.0" /></RateField>
        </Transport>

        <Mixer>
          <MasterStrip />
          <ChannelStrip index={1} name="Sabrina Carpenter" peak="-9.6" fader={52} level={50} gap={1} />
          <ChannelStrip index={2} name="" peak="-13.1" fader={92} level={55} gap={6} hot />
          <Tip role="tooltip">Volume: -10.6dB</Tip>
          <Pointer width="9" height="14" viewBox="0 0 9 14"><path d="M0.5 0.5V11L3 8.8L4.7 13L6.5 12.2L4.8 8.3H8.2z" fill="#fff" stroke="#222" strokeWidth="0.8" /></Pointer>
        </Mixer>
        <DockTabs>
          <DockTab>
            <svg width="7" height="7" fill="none" stroke="currentColor"><path d="M0.5 0.5h6v6h-6zM2 2l3 3M5 2L2 5" /></svg>
            Mixer
          </DockTab>
        </DockTabs>
      </Window>

      <Chat aria-label="Chat">
        {chat.map((m, i) => (
          <Message key={i}>
            {m.vip && <CrownBadges />}
            <Author $color={m.color}>{m.who}</Author>:
            {m.text ? <Body>{m.text}</Body> : <Emote><BrokenImage /></Emote>}
          </Message>
        ))}
      </Chat>
    </Desktop>
  );
}
